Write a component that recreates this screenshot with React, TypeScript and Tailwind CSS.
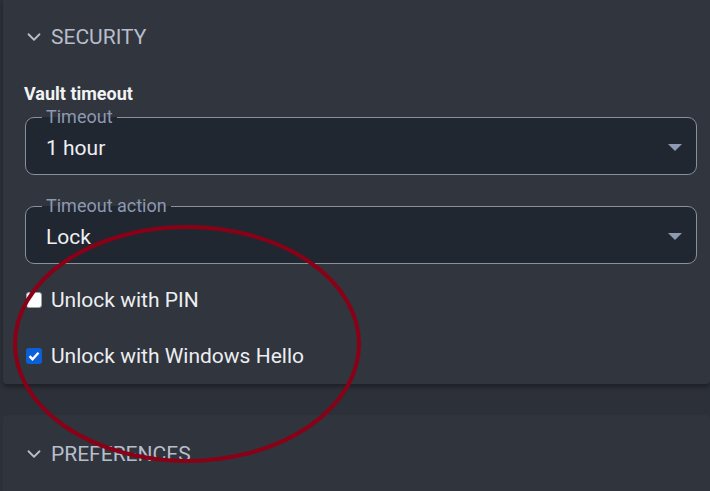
import { ChevronDown } from 'lucide-react';

function Caret() {
  return (
    <svg width="14" height="8" viewBox="0 0 14 8" className="shrink-0">
      <path d="M0 0h14L7 7z" fill="#8d9ab2" />
    </svg>
  );
}

function SelectField({ label, value }: { label: string; value: string }) {
  return (
    <fieldset className="ml-[22px] mr-[13px] rounded-[9px] border border-[#8a909c] bg-[#212731] pb-[13px] pl-[20px] pr-[14px] pt-0">
      <legend className="ml-[-4px] px-[4px] text-[18px] leading-[18px] text-[#8c99b0]">{label}</legend>
      <div className="flex items-center justify-between pt-[9px]">
        <span className="text-[21px] leading-[26px] text-[#eef0f4]">{value}</span>
        <Caret />
      </div>
    </fieldset>
  );
}

function Check({ checked, label }: { checked: boolean; label: string }) {
  return (
    <label className="flex items-center gap-[9px] pl-[23px]">
      {checked ? (
        <span className="flex h-[16px] w-[16px] items-center justify-center rounded-[3px] bg-[#0b60d8]">
          <svg width="12" height="10" viewBox="0 0 12 10">
            <path d="M1.5 5.2l3 3 6-6.5" fill="none" stroke="white" strokeWidth="2.4" />
          </svg>
        </span>
      ) : (
        <span className="h-[16px] w-[16px] rounded-[3px] border border-[#9aa0aa] bg-white" />
      )}
      <span className="text-[21px] leading-[24px] text-[#eceef2]">{label}</span>
    </label>
  );
}

export default function App() {
  return (
    <div className="relative h-[491px] w-[710px] overflow-hidden bg-[#2c3038] pl-[3px]" style={{ fontFamily: 'Roboto, sans-serif' }}>
      {/* Security section */}
      <section className="rounded-b-[4px] bg-[#31353d] pb-[16px] pt-[25px] shadow-[0_3px_4px_rgba(0,0,0,0.35)]">
        <div className="flex items-center gap-[6px] pl-[20px] text-[#b8bdcc]">
          <ChevronDown size={22} strokeWidth={2} />
          <span className="text-[21px] leading-[24px]">SECURITY</span>
        </div>
        <h3 className="mt-[35px] pl-[21px] text-[18px] font-bold leading-[20px] text-[#f2f3f5]">Vault timeout</h3>
        <div className="mt-[4px] flex flex-col gap-[22px]">
          <SelectField label="Timeout" value="1 hour" />
          <SelectField label="Timeout action" value="Lock" />
        </div>
        <div className="mt-[24px] flex flex-col gap-[32px]">
          <Check checked={false} label="Unlock with PIN" />
          <Check checked label="Unlock with Windows Hello" />
        </div>
      </section>

      {/* Preferences section */}
      <section className="mt-[31px] h-[100px] rounded-t-[4px] bg-[#30343c] pt-[27px]">
        <div className="flex items-center gap-[6px] pl-[20px] text-[#b8bdcc]">
          <ChevronDown size={22} strokeWidth={2} />
          <span className="text-[21px] leading-[24px]">PREFERENCES</span>
        </div>
      </section>

      {/* annotation */}
      <svg className="pointer-events-none absolute left-0 top-0" width="710" height="491">
        <ellipse cx="187" cy="344" rx="172" ry="117" fill="none" stroke="#8a0016" strokeWidth="4" />
      </svg>
    </div>
  );
}
